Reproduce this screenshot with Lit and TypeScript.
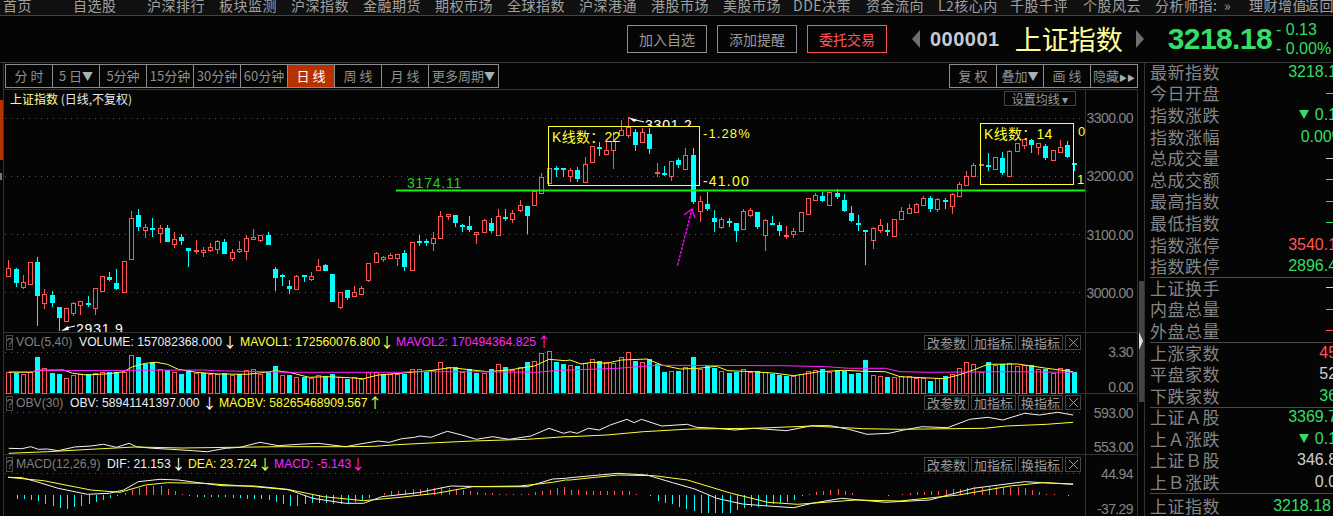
import { LitElement, html, css, svg } from "lit";
import { customElement } from "lit/decorators.js";

const RED = "#ff5555";
const CYAN = "#00ffff";
const YEL = "#ffff33";

// Candle rows: [wick top, body top, body bottom, wick bottom, 1 = red / 0 = cyan]
const Z5: number[][] = [
  [450,475,497,497,1],[475,477,518,530,0],[495,517,530,537,1],[455,457,521,521,1],[441,456,557,648,0],
  [537,553,578,597,1],[544,555,579,590,0],[591,591,623,662,0],[595,595,632,635,1],[577,580,608,617,1],
  [574,574,586,614,1],[558,579,581,590,0],[535,535,593,614,1],[499,499,542,545,1],[487,502,510,513,0],
  [477,519,537,539,0],[454,454,545,545,1],[303,325,446,450,1],[297,316,350,362,0],[343,352,359,384,1],
  [324,355,359,380,0],[346,355,368,398,1],[346,354,395,395,0],[366,388,401,413,1],[373,381,393,404,0],
  [414,414,423,470,0],[390,420,423,431,1],[412,421,425,440,1],[400,412,419,425,1],[390,394,416,431,1],
  [388,396,431,431,0],[418,427,443,452,1],[393,418,422,428,1],[375,385,422,449,1],[358,381,386,389,1],
  [376,376,389,395,1],[366,376,404,404,0],[472,477,503,543,0],[492,496,498,527,0],[510,528,537,551,0],
  [495,498,536,536,1],[495,495,500,515,0],[487,499,507,512,1],[447,469,479,479,1],[463,466,483,483,0],
  [492,492,575,575,0],[546,546,590,596,1],[540,540,563,569,0],[528,546,557,557,1],[529,535,553,553,1],
  [460,460,510,515,1],[427,430,455,458,1],
];
const Z6: number[][] = [
  [452,457,463,470,1],[445,451,459,463,1],[447,447,460,483,1],[435,444,485,497,0],[411,411,494,494,1],
  [391,407,409,422,0],[402,407,409,422,0],[381,400,415,437,1],[318,334,398,398,1],[328,328,333,344,1],
  [330,330,353,365,0],[357,360,362,381,0],[333,363,375,381,0],[380,382,388,417,1],[343,346,382,385,1],
  [339,354,377,384,0],[312,334,391,391,1],[312,336,339,348,0],[315,325,341,353,1],[285,301,315,322,1],
  [303,303,332,387,0],[257,257,299,299,1],[205,217,265,265,1],[190,190,233,233,1],[184,190,192,215,0],
  [190,190,193,215,0],[190,196,212,230,1],[187,196,221,230,0],[156,178,230,230,1],[124,124,172,172,1],
  [112,126,133,152,0],[106,136,147,148,1],[80,108,136,191,1],[45,75,90,90,1],[37,65,90,100,1],
  [72,82,120,137,0],[70,82,110,110,1],[70,88,131,146,0],[175,202,204,215,1],[184,204,210,212,0],
  [168,168,212,227,1],[158,165,179,189,0],[130,151,193,193,1],[130,150,290,296,0],[273,289,317,350,1],
  [260,297,312,318,0],[316,339,351,381,0],[335,343,365,372,1],[340,349,352,366,0],[354,354,377,410,0],
  [313,318,371,371,1],[308,315,330,335,1],[321,321,365,373,0],
];
const Z7: number[][] = [
  [343,345,391,437,1],[333,353,358,360,0],[351,360,377,392,0],[363,391,393,403,1],[370,378,388,399,1],
  [320,322,377,377,1],[280,280,327,329,1],[263,271,285,288,1],[261,273,288,290,0],[260,260,299,299,1],
  [252,265,276,282,0],[267,285,318,320,0],[303,324,347,352,0],[330,355,360,378,0],[375,376,378,480,0],
  [367,370,406,432,1],[342,361,376,384,1],[354,376,380,392,0],[341,342,392,392,1],[305,319,341,341,1],
  [296,310,325,328,1],[295,297,320,323,1],[273,280,299,299,1],[273,279,313,320,0],[280,283,313,320,1],
  [278,286,288,311,0],[265,268,302,327,1],[231,237,272,272,1],[198,213,239,239,1],[175,181,212,212,1],
  [178,178,181,181,1],[145,181,185,198,0],[156,157,191,194,1],[141,159,204,210,0],[136,139,212,212,1],
  [115,115,137,137,1],[103,103,119,133,1],[102,105,119,145,0],[115,115,127,151,1],[117,123,159,165,0],
  [136,136,164,164,1],[106,127,140,140,1],[108,120,155,158,0],[173,175,177,198,0],
];
const conv = (rows: number[][], off: number) =>
  rows.map((r) => [off + r[0] / 3, off + r[1] / 3, off + r[2] / 3, off + r[3] / 3, r[4]]);
const CANDLES = [...conv(Z5, 110), ...conv(Z6, 105), ...conv(Z7, 105)];

const VOL8: number[][] = [
  [125,1],[128,0],[132,1],[126,1],[81,0],[115,1],[130,0],[132,0],[145,1],[135,1],[133,1],[133,0],[130,1],[125,1],[127,0],[127,0],[125,1],
  [75,1],[81,0],[103,0],[97,0],[116,1],[120,0],[126,1],[132,0],[120,0],[128,1],[130,0],[133,1],[133,1],[130,0],[134,1],[133,0],[120,1],[118,1],
  [132,1],[125,0],[108,0],[136,1],[135,0],[142,1],[140,0],[145,1],[135,1],[139,0],[132,0],[141,1],[147,0],[142,1],[148,1],[127,1],[125,1],
  [132,0],[133,1],[132,1],[132,0],[118,1],[118,1],[125,0],[120,1],[97,1],[112,1],[112,0],[125,1],[116,0],[130,0],[130,1],[117,0],[103,1],
  [112,0],[120,1],[112,1],[97,0],[94,1],[70,1],[63,1],[96,0],[102,0],
];
const VOL9: number[][] = [
  [105,1],[108,0],[100,1],[88,1],[93,0],[96,1],[100,1],[82,1],[67,1],[93,0],[97,1],[88,0],[103,0],[125,0],[123,1],[122,0],[112,1],[81,0],
  [116,1],[109,0],[113,0],[123,1],[129,0],[126,0],[118,1],[125,1],[124,0],[127,1],[131,0],[134,0],[138,0],[137,1],[133,1],[124,1],[120,1],[117,0],
  [125,1],[120,0],[122,0],[131,0],[129,0],[90,0],[135,1],[139,1],[141,0],[142,1],[139,1],[139,1],[143,1],[143,1],[153,0],[145,1],[138,0],
  [132,1],[115,1],[97,1],[102,1],[127,1],[96,0],[105,1],[102,0],[100,1],[108,1],[105,1],[106,0],[117,1],[117,0],[130,1],[115,1],[117,0],[125,0],
];

const p8 = (a: number[][]) => a.map(([x, y]) => [x / 2.75, 330 + y / 3]);
const p9 = (a: number[][]) => a.map(([x, y]) => [570 + x / 2.727, 330 + y / 3]);
const join = (a: number[][], b: number[][]) => [...p8(a), ...p9(b)];

const MA1 = join(
  [[24,127],[90,127],[100,121],[175,120],[200,130],[240,135],[300,131],[340,125],[365,110],[400,100],[430,97],[460,103],[490,118],[540,127],[600,132],[680,133],[720,128],[760,122],[800,128],[850,142],[900,140],[960,143],[1000,146],[1040,135],[1100,130],[1180,122],[1240,113],[1300,120],[1340,125],[1400,120],[1470,108],[1510,88],[1555,92]],
  [[0,90],[30,102],[60,97],[100,100],[140,90],[210,87],[250,105],[300,117],[350,115],[400,109],[430,122],[500,125],[560,130],[610,137],[680,125],[750,121],[800,124],[860,125],[900,140],[1020,146],[1060,135],[1100,120],[1140,103],[1220,102],[1300,115],[1372,125]]
);
const MA2 = join(
  [[24,125],[90,125],[100,122],[560,120],[590,122],[800,127],[1100,127],[1130,125],[1190,125],[1300,125],[1480,127],[1490,125],[1555,120]],
  [[0,120],[130,115],[165,112],[240,106],[580,107],[700,110],[760,115],[860,115],[900,125],[980,127],[1200,125],[1372,127]]
);
const OBV = join(
  [[24,355],[60,356],[85,350],[105,358],[130,357],[160,362],[205,351],[250,348],[285,343],[320,352],[355,340],[375,350],[420,355],[470,358],[530,362],[570,365],[620,355],[660,352],[715,337],[765,347],[820,343],[875,340],[950,350],[990,342],[1040,333],[1070,337],[1105,326],[1140,322],[1155,318],[1185,322],[1230,304],[1270,315],[1310,328],[1355,320],[1400,328],[1460,318],[1510,295],[1550,310]],
  [[0,305],[20,310],[50,295],[80,300],[110,285],[155,268],[175,278],[195,268],[250,288],[320,283],[345,292],[400,295],[450,300],[500,295],[590,302],[660,287],[710,287],[760,298],[810,313],[870,310],[910,300],[960,290],[1030,293],[1090,268],[1140,262],[1180,270],[1240,250],[1280,255],[1330,247],[1372,255]]
);
const MAOBV = join(
  [[24,370],[130,365],[250,358],[370,351],[500,354],[640,352],[770,350],[960,350],[1030,349],[1090,344],[1200,338],[1300,333],[1450,328],[1555,320]],
  [[0,320],[100,315],[200,305],[330,297],[500,295],[660,288],[800,296],[900,298],[1130,295],[1190,288],[1300,283],[1372,277]]
);
const DIF = join(
  [[22,442],[60,443],[100,455],[160,475],[240,493],[300,490],[340,480],[380,455],[440,448],[490,450],[610,467],[700,468],[790,478],[860,505],[950,520],[1000,520],[1050,500],[1150,488],[1240,468],[1330,470],[1450,470],[1520,447],[1555,445]],
  [[0,443],[60,437],[130,430],[210,435],[280,458],[340,477],[400,505],[470,522],[540,528],[610,533],[660,520],[740,505],[860,517],[980,510],[1100,475],[1240,455],[1372,463]]
);
const DEA = join(
  [[22,442],[120,452],[250,480],[330,487],[400,465],[460,458],[560,460],[700,470],[800,480],[890,500],[1000,512],[1100,502],[1200,490],[1300,470],[1430,468],[1520,457],[1555,450]],
  [[0,450],[130,435],[230,437],[320,450],[440,490],[540,517],[620,523],[780,510],[900,513],[1060,495],[1200,468],[1290,458],[1372,462]]
);
const HIST = join(
  [[42,505],[102,513],[163,535],[183,537],[222,528],[262,518],[302,503],[330,497],[360,482],[400,467],[440,468],[480,483],[510,495],[538,500],[600,500],[740,510],[800,530],[850,520],[900,520],[960,522],[1010,505],[1040,495],[1070,485],[1140,478],[1212,472],[1260,478],[1310,485],[1370,492],[1450,492],[1480,485],[1530,475],[1555,470]],
  [[0,480],[60,483],[160,483],[180,493],[215,495],[235,513],[275,522],[355,550],[430,550],[470,535],[530,528],[610,512],[630,498],[650,493],[690,482],[730,478],[790,495],[880,497],[920,490],[1000,482],[1100,472],[1230,470],[1290,490],[1350,497],[1376,503]]
);

const N = CANDLES.length;
const X0 = 8.3;
const PITCH = (1074.3 - X0) / (N - 1);
const cx = (i: number) => Math.round(X0 + i * PITCH);
const pts = (a: number[][]) => a.map(([x, y]) => `${x.toFixed(1)},${y.toFixed(1)}`).join(" ");
const histAt = (x: number) => {
  for (let i = 0; i < HIST.length - 1; i++) {
    const a = HIST[i], b = HIST[i + 1];
    if (x >= a[0] && x <= b[0]) return a[1] + ((b[1] - a[1]) * (x - a[0])) / (b[0] - a[0] || 1);
  }
  return 495;
};

const NAV = [
  ["首页", 70], ["自选股", 74], ["沪深排行", 72], ["板块监测", 72], ["沪深指数", 72], ["金融期货", 72], ["期权市场", 72], ["全球指数", 72],
  ["沪深港通", 72], ["港股市场", 72], ["美股市场", 70], ["DDE决策", 73], ["资金流向", 72], ["L2核心内", 72], ["千股千评", 73], ["个股风云", 72],
  ["分析师指:", 69], ["»", 25], ["理财增值", 56], ["返回", 40],
] as [string, number][];

type Row = { l: string; v?: string; c?: string; tri?: boolean; dash?: string };
const INFO: Row[][] = [
  [
    { l: "最新指数", v: "3218.18", c: "up" },
    { l: "今日开盘", dash: "#3ddc6a" },
    { l: "指数涨跌", v: "0.13", c: "up", tri: true },
    { l: "指数涨幅", v: "0.00%", c: "up" },
    { l: "总成交量", dash: "#cfcfcf" },
    { l: "总成交额", dash: "#22e6e6" },
    { l: "最高指数", dash: "#3ddc6a" },
    { l: "最低指数", dash: "#3ddc6a" },
    { l: "指数涨停", v: "3540.18", c: "dn" },
    { l: "指数跌停", v: "2896.45", c: "up" },
  ],
  [
    { l: "上证换手", dash: "#cfcfcf" },
    { l: "内盘总量", dash: "#3ddc6a" },
    { l: "外盘总量", dash: "#ff5555" },
  ],
  [
    { l: "上涨家数", v: "457", c: "dn" },
    { l: "平盘家数", v: "523", c: "flat" },
    { l: "下跌家数", v: "366", c: "up" },
  ],
  [
    { l: "上证Ａ股", v: "3369.75", c: "up" },
    { l: "上Ａ涨跌", v: "0.13", c: "up", tri: true },
    { l: "上证Ｂ股", v: "346.86", c: "flat" },
    { l: "上Ｂ涨跌", v: "0.00", c: "flat" },
  ],
];

@customElement("app-root")
export class AppRoot extends LitElement {
  static styles = css`
    :host {
      display: block;
      width: 1333px;
      height: 516px;
      overflow: hidden;
      background: #050505;
      font-family: "Noto Sans CJK SC", "Liberation Sans", sans-serif;
      color: #8a8a8a;
    }
    .nav {
      display: flex;
      height: 15px;
      padding-left: 3px;
      overflow: hidden;
      background: #101010;
      border-bottom: 1px solid #444;
      color: #a0a0a0;
      font-size: 14px;
      line-height: 15px;
      letter-spacing: 0.5px;
      white-space: nowrap;
    }
    .nav span { flex: none; overflow: hidden; position: relative; top: -2px; }
    .top {
      display: flex;
      align-items: center;
      height: 47px;
      padding-left: 627px;
      border-bottom: 1px solid #3a3a3a;
      box-sizing: border-box;
    }
    .tbtn {
      box-sizing: border-box;
      width: 80px;
      height: 28px;
      margin-right: 10px;
      border: 1px solid #8c8c8c;
      color: #9a9a9a;
      font-size: 14px;
      line-height: 26px;
      text-align: center;
    }
    .tbtn.red { border-color: #ff5555; color: #ff5555; }
    .tri-l, .tri-r {
      width: 0; height: 0;
      border-top: 9px solid transparent;
      border-bottom: 9px solid transparent;
    }
    .tri-l { margin-left: 15px; border-right: 8px solid #6e6e6e; }
    .tri-r { margin-left: 10px; border-left: 8px solid #6e6e6e; }
    .code {
      margin-left: 10px;
      color: #c4cbd4;
      font: bold 20px/28px "Liberation Sans", sans-serif;
      letter-spacing: 0.5px;
    }
    .name {
      margin-left: 15px;
      width: 111px;
      color: #ffff99;
      font-size: 27px;
      line-height: 36px;
      white-space: nowrap;
    }
    .price {
      margin-left: 24px;
      color: #33dd66;
      font: bold 30px/36px "Liberation Sans", sans-serif;
      letter-spacing: -0.6px;
    }
    .chg {
      margin-left: 4px;
      color: #33dd66;
      font: 16px/19px "Liberation Sans", sans-serif;
      white-space: nowrap;
    }
    .main { display: flex; height: 453px; }
    .rail {
      flex: none;
      width: 3px;
      height: 100%;
      border-right: 1px solid #333;
      display: flex;
      flex-direction: column;
      align-items: flex-start;
    }
    .rail i { display: block; }
    .rail .orange { width: 3px; height: 60px; margin-top: 37px; background: #b83200; }
    .rail .notch { width: 2px; height: 7px; margin-top: 13px; background: #777; }
    .center { flex: none; width: 1134px; }
    .periods {
      display: flex;
      justify-content: space-between;
      height: 27px;
      padding: 1px 0 0 1px;
      box-sizing: border-box;
      border-bottom: 1px solid #333;
    }
    .group {
      display: flex;
      height: 24px;
      box-sizing: border-box;
      border: 1px solid #8c8c8c;
    }
    .group span {
      box-sizing: border-box;
      width: 47px;
      border-left: 1px solid #8c8c8c;
      color: #8f8f8f;
      font-size: 13px;
      line-height: 21px;
      text-align: center;
      white-space: nowrap;
      overflow: hidden;
    }
    .group span:first-child { width: 46px; border-left: 0; }
    .group span.on { background: #b83200; color: #fff; }
    .group .caret { color: #a8b0b8; font-size: 11px; }
    .group .dbl { color: #a8b0b8; font-size: 8px; }
    .stage { position: relative; height: 426px; overflow: hidden; }
    .stage > svg { display: block; position: absolute; left: 0; top: 0; }
    .stage text { font-family: "Liberation Sans", "Noto Sans CJK SC", sans-serif; }
    .stage text.arrow { font-family: "Noto Sans CJK SC", sans-serif; }
    .chip {
      position: absolute;
      display: flex;
      align-items: center;
      justify-content: center;
      box-sizing: border-box;
      height: 15px;
      border: 1px solid #444;
      color: #9a9a9a;
      font-size: 13px;
      line-height: 13px;
      white-space: nowrap;
      overflow: hidden;
    }
    .title {
      position: absolute;
      left: 6px;
      top: 0;
      color: #e8e8e8;
      font-size: 12px;
      line-height: 17px;
      white-space: nowrap;
    }
    .title b { font-weight: normal; color: #ffff99; }
    .ma {
      position: absolute;
      left: 1000px;
      top: 1px;
      box-sizing: border-box;
      width: 72px;
      height: 15px;
      border: 1px solid #444;
      color: #9a9a9a;
      font-size: 12px;
      line-height: 13px;
      text-align: center;
      white-space: nowrap;
    }
    .split {
      flex: none;
      box-sizing: border-box;
      width: 7px;
      height: 100%;
      padding-top: 218px;
      border-right: 1px solid #333;
    }
    .split .bar {
      position: relative;
      width: 5px;
      height: 121px;
      margin-left: 1px;
      background: #444;
    }
    .split .bar::after {
      content: "";
      position: absolute;
      left: 0;
      top: 51px;
      border-top: 9px solid transparent;
      border-bottom: 9px solid transparent;
      border-left: 4px solid #e0e0e0;
    }
    .panel { flex: none; width: 188px; padding: 0 0 0 5px; box-sizing: border-box; overflow: hidden; }
    .inner { margin-top: -2px; width: 205px; }
    .sec { border-bottom: 1px solid #4a4a4a; margin-bottom: -1px; }
    .row {
      display: flex;
      align-items: center;
      justify-content: space-between;
      height: 21.6px;
      width: 196px;
      font-size: 17px;
      line-height: 20px;
      white-space: nowrap;
      color: #848484;
      letter-spacing: 0.5px;
    }
    .val { font: 16px/20px "Liberation Sans", sans-serif; letter-spacing: 0; display: flex; align-items: center; }
    .up { color: #33dd66; }
    .dn { color: #ff5555; }
    .flat { color: #cfcfcf; }
    .tri {
      width: 0; height: 0;
      margin-right: 6px;
      border-top: 9px solid currentColor;
      border-left: 5px solid transparent;
      border-right: 5px solid transparent;
    }
    .dash { display: block; width: 20px; height: 1px; }
    .row.last { width: 181px; margin-top: 2px; }
  `;

  private candles() {
    return CANDLES.map((c, i) => {
      const x = cx(i);
      const col = c[4] ? RED : CYAN;
      const h = Math.max(1, Math.round(c[2]) - Math.round(c[1]));
      const top = Math.round(c[1]);
      return svg`
        <line x1=${x + 0.5} x2=${x + 0.5} y1=${Math.round(c[0])} y2=${top} stroke=${col} />
        <line x1=${x + 0.5} x2=${x + 0.5} y1=${top + h} y2=${Math.round(c[3])} stroke=${col} />
        ${c[4]
          ? svg`<rect x=${x - 2 + 0.5} y=${top + 0.5} width="4" height=${h} fill="#050505" stroke=${col} />`
          : svg`<rect x=${x - 2} y=${top} width="5" height=${Math.max(h, 2)} fill=${col} />`}`;
    });
  }

  private volumes() {
    const tops = [...VOL8, ...VOL9];
    return tops.slice(0, N).map((t, i) => {
      const x = cx(i);
      const y = Math.round(330 + t[0] / 3);
      return t[1]
        ? svg`<rect x=${x - 2 + 0.5} y=${y + 0.5} width="4" height=${393 - y} fill="none" stroke=${RED} />`
        : svg`<rect x=${x - 2} y=${y} width="5" height=${393 - y} fill=${CYAN} />`;
    });
  }

  private macdBars() {
    return CANDLES.map((_, i) => {
      const x = cx(i) + 1;
      const y = Math.round(histAt(x));
      const zero = 495;
      const col = y < zero ? RED : CYAN;
      if (x < 14) return null;
      return svg`<line x1=${x + 0.5} x2=${x + 0.5} y1=${Math.min(y, zero)} y2=${Math.max(y, zero)} stroke=${col} />`;
    });
  }

  private grid() {
    return [118, 176, 234, 292, 352, 412, 473].map(
      (y) => svg`<line x1="5" x2="1085" y1=${y + 0.5} y2=${y + 0.5} stroke="#555" stroke-dasharray="1 5" />`
    );
  }

  private axis() {
    return [
      ["3300.00", 123], ["3200.00", 181], ["3100.00", 240], ["3000.00", 298],
      ["3.30", 357], ["0.00", 392], ["593.00", 418], ["553.00", 452], ["44.94", 479], ["-37.29", 514],
    ].map(([t, y]) => svg`<text x="1133" y=${y} text-anchor="end" font-size="14" letter-spacing="-0.6" fill="#858585">${t}</text>`);
  }

  private tag(x: number, y: number, parts: [string, string, number][], arrows: [string, string, number][]) {
    return svg`
      <rect x=${x + 0.5} y=${y + 0.5} width="6" height="14" fill="none" stroke="#4a4a4a" />
      <text x=${x + 0.5} y=${y + 12} font-size="12" fill="#777">?</text>
      ${parts.map(([t, c, px]) => svg`<text x=${px} y=${y + 11} font-size="12.2" fill=${c}>${t}</text>`)}
      ${arrows.map(
        ([t, c, px]) => svg`<text class="arrow" x=${px} y=${y + 12} font-size="14" text-anchor="middle" fill=${c}>${t}</text>`
      )}`;
  }

  private chips(y: number) {
    const items: [string, number, number][] = [["改参数", 920, 45], ["加指标", 967, 45], ["换指标", 1014, 45]];
    return html`${items.map(
      ([t, x, w]) => html`<div class="chip" style="left:${x}px;top:${y}px;width:${w}px">${t}</div>`
    )}<div class="chip" style="left:1061px;top:${y}px;width:16px">
        <svg width="9" height="9" viewBox="0 0 9 9"><path d="M0 0L9 9M9 0L0 9" stroke="#9a9a9a" fill="none" /></svg>
      </div>`;
  }

  render() {
    return html`
      <div class="nav">${NAV.map(([t, w]) => html`<span style="width:${w}px">${t}</span>`)}</div>
      <div class="top">
        <div class="tbtn">加入自选</div>
        <div class="tbtn">添加提醒</div>
        <div class="tbtn red">委托交易</div>
        <div class="tri-l"></div>
        <div class="code">000001</div>
        <div class="name">上证指数</div>
        <div class="tri-r"></div>
        <div class="price">3218.18</div>
        <div class="chg">- 0.13<br />- 0.00%</div>
      </div>
      <div class="main">
        <div class="rail"><i class="orange"></i><i class="notch"></i></div>
        <div class="center">
          <div class="periods">
            <div class="group">
              <span>分 时</span><span>5 日<b class="caret">▼</b></span><span>5分钟</span><span>15分钟</span><span>30分钟</span>
              <span>60分钟</span><span class="on">日 线</span><span>周 线</span><span>月 线</span><span style="width:70px">更多周期<b class="caret">▼</b></span>
            </div>
            <div class="group">
              <span>复 权</span><span>叠加<b class="caret">▼</b></span><span>画 线</span><span>隐藏<b class="dbl">▶▶</b></span>
            </div>
          </div>
          <div class="stage">
            <svg width="1134" height="426" viewBox="4 90 1134 426">
              <defs>
                <clipPath id="clipHigh"><rect x="630" y="110" width="100" height="16" /></clipPath>
                <clipPath id="clipLow"><rect x="60" y="318" width="120" height="14" /></clipPath>
              </defs>
              ${this.grid()}
              <line x1="1085.5" x2="1085.5" y1="89" y2="516" stroke="#333" />
              <line x1="1137.5" x2="1137.5" y1="89" y2="516" stroke="#333" />
              ${[332, 393, 454].map((y) => svg`<line x1="0" x2="1138" y1=${y + 0.5} y2=${y + 0.5} stroke="#333" />`)}
              ${this.axis()}
              ${this.candles()}

              <line x1="396" x2="1085" y1="190.5" y2="190.5" stroke="#11f011" stroke-width="2" />
              <text x="407" y="188" font-size="14" letter-spacing="0.8" fill="#22cc22">3174.11</text>

              <rect x="548.5" y="126.5" width="151" height="59" fill="none" stroke=${YEL} />
              <text x="552" y="142" font-size="14" letter-spacing="0.3" fill=${YEL}>K线数：22</text>
              <text x="703" y="138" font-size="13" letter-spacing="1.1" fill=${YEL}>-1.28%</text>
              <text x="703" y="186" font-size="14" letter-spacing="1.2" fill=${YEL}>-41.00</text>

              <rect x="980.5" y="123.5" width="93" height="61" fill="none" stroke=${YEL} />
              <text x="984" y="139" font-size="14" letter-spacing="0.3" fill=${YEL}>K线数：14</text>
              <text x="1078" y="136" font-size="13" fill=${YEL}>0</text>
              <text x="1077" y="184" font-size="13" fill=${YEL}>1</text>

              <polyline points="677.5,265.5 692,209" fill="none" stroke="#ff00ff" stroke-width="1.4" stroke-dasharray="3 1" />
              <polyline points="684,215 692,209 695,218" fill="none" stroke="#ff00ff" stroke-width="1.2" />

              <polygon points="628,117 637,120 634,122" fill="#fff" />
              <line x1="632" y1="119" x2="644" y2="122" stroke="#fff" />
              <text x="645" y="130" font-size="14" letter-spacing="0.8" fill="#fff" clip-path="url(#clipHigh)">3301.2</text>
              <polygon points="61,331 68,326 69,330" fill="#fff" />
              <line x1="66" y1="328" x2="75" y2="326" stroke="#fff" />
              <text x="76" y="334" font-size="14" letter-spacing="0.8" fill="#fff" clip-path="url(#clipLow)">2931.9</text>

              ${this.volumes()}
              <polyline points=${pts(MA1)} fill="none" stroke=${YEL} />
              <polyline points=${pts(MA2)} fill="none" stroke="#ff22ff" />
              <polyline points=${pts(OBV)} fill="none" stroke="#f4f4f4" />
              <polyline points=${pts(MAOBV)} fill="none" stroke=${YEL} />
              ${this.macdBars()}
              <polyline points=${pts(DIF)} fill="none" stroke="#f4f4f4" />
              <polyline points=${pts(DEA)} fill="none" stroke=${YEL} />

              ${this.tag(6, 335, [
                ["VOL(5,40)", "#808080", 16],
                ["VOLUME: 157082368.000", "#e8eef4", 79],
                ["MAVOL1: 172560076.800", YEL, 240],
                ["MAVOL2: 170494364.825", "#ff22ff", 396],
              ], [["↓", "#fff", 230], ["↓", YEL, 387], ["↑", "#ff22ff", 544]])}
              ${this.tag(6, 396, [
                ["OBV(30)", "#808080", 16],
                ["OBV: 58941141397.000", "#e8eef4", 70],
                ["MAOBV: 58265468909.567", YEL, 219],
              ], [["↓", "#fff", 209.5], ["↑", YEL, 375]])}
              ${this.tag(6, 457, [
                ["MACD(12,26,9)", "#808080", 16],
                ["DIF: 21.153", "#e8eef4", 107],
                ["DEA: 23.724", YEL, 188],
                ["MACD: -5.143", "#ff22ff", 274],
              ], [["↓", "#fff", 178.5], ["↓", YEL, 265], ["↓", "#ff22ff", 358]])}
            </svg>
            <div class="title"><b>上证指数</b> (日线,不复权)</div>
            <div class="ma">设置均线 ▾</div>
            ${this.chips(245)}${this.chips(305)}${this.chips(367)}
          </div>
        </div>
        <div class="split"><div class="bar"></div></div>
        <div class="panel">
          <div class="inner">
            ${INFO.map(
              (sec) => html`<div class="sec">
                ${sec.map(
                  (r) => html`<div class="row">
                    <span>${r.l}</span>
                    ${r.dash
                      ? html`<i class="dash" style="background:${r.dash}"></i>`
                      : html`<span class="val ${r.c}">${r.tri ? html`<span class="tri"></span>` : ""}${r.v}</span>`}
                  </div>`
                )}
              </div>`
            )}
            <div class="row last"><span>上证指数</span><span class="val up">3218.18</span></div>
          </div>
        </div>
      </div>
    `;
  }
}
